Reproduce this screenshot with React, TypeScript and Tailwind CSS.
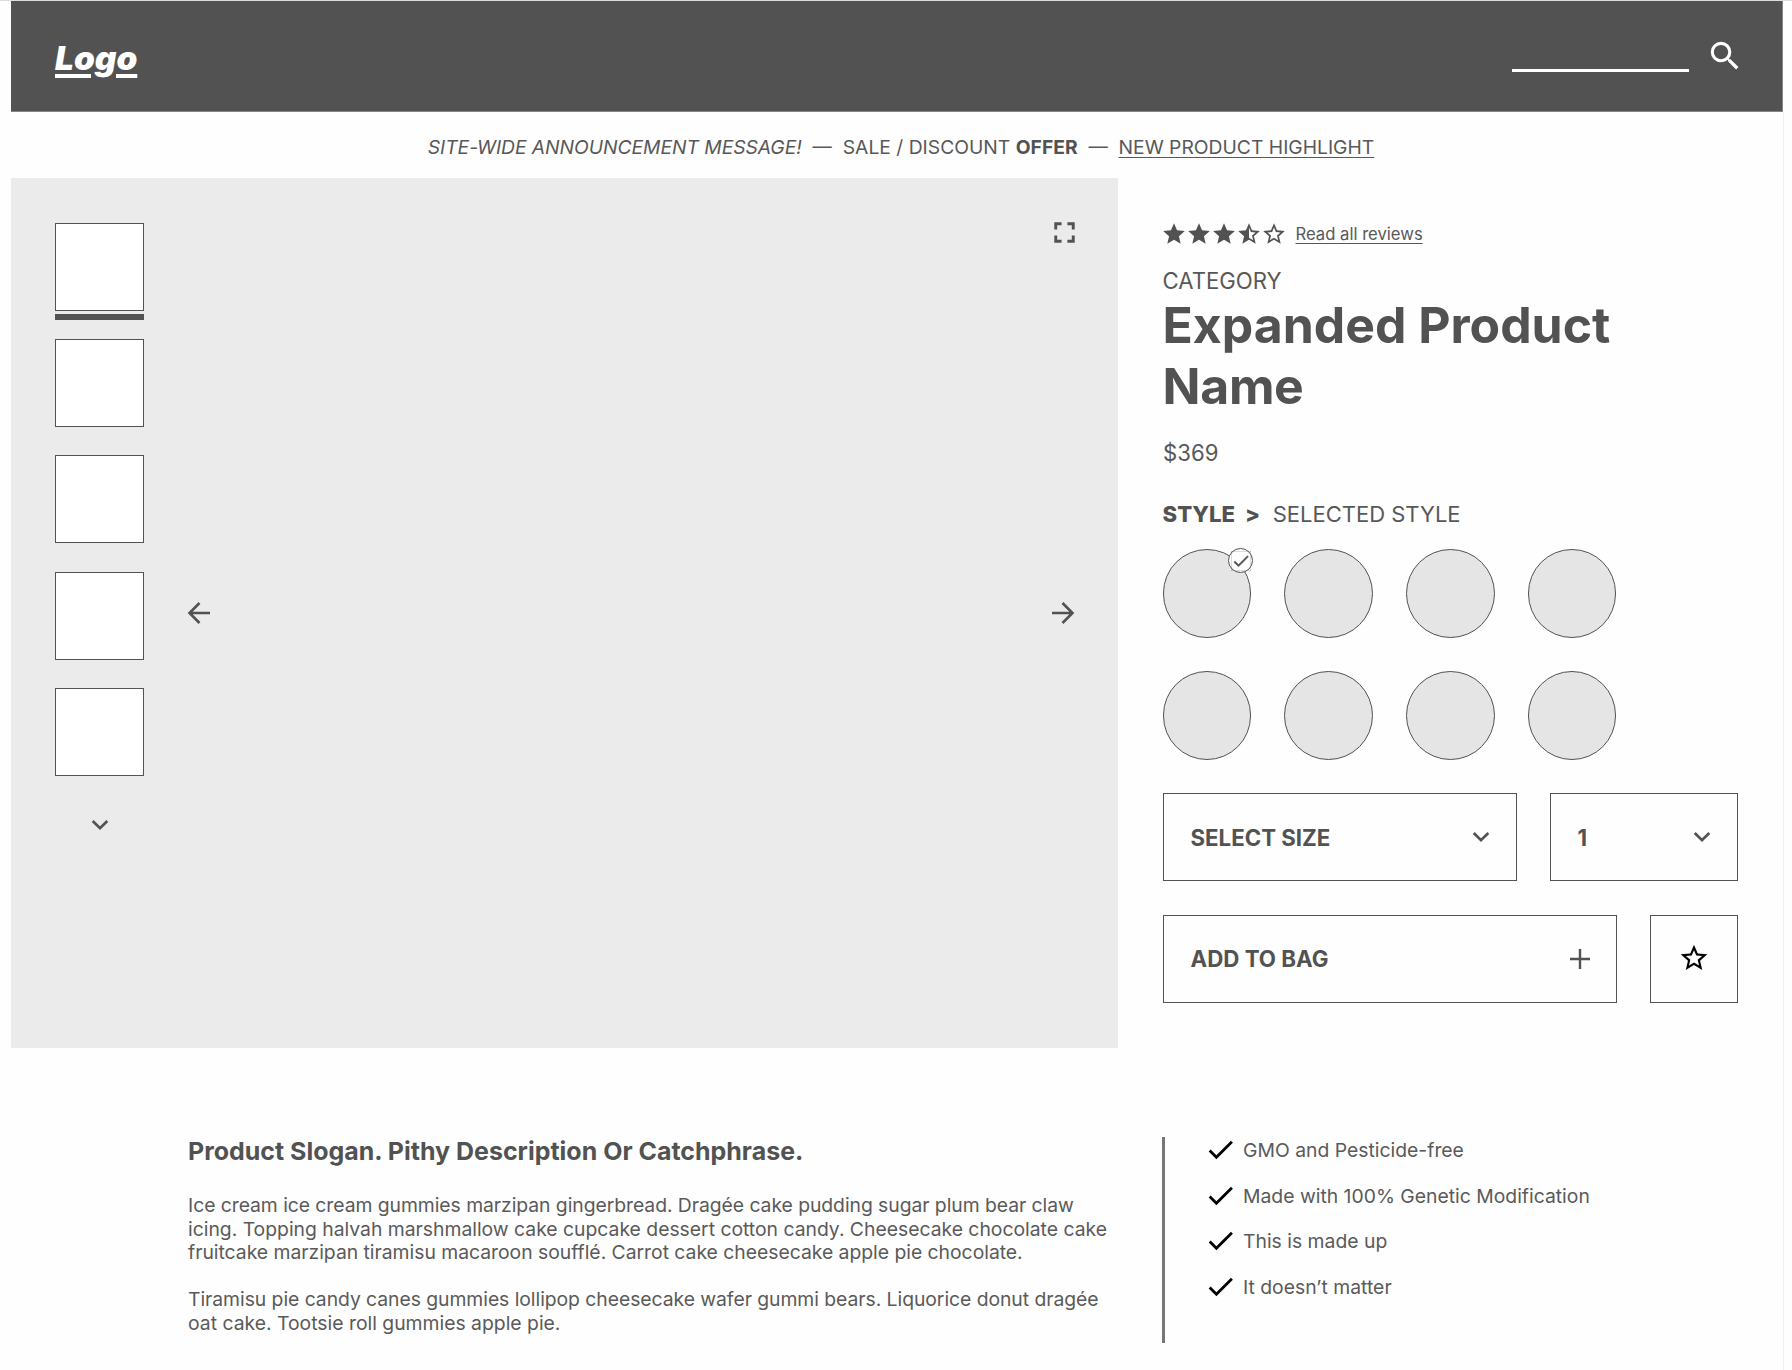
import { MdStar, MdStarBorder, MdStarHalf, MdFullscreen, MdSearch, MdCheck } from "react-icons/md";

const thumbnails = [0, 1, 2, 3, 4];
const swatches = [0, 1, 2, 3, 4, 5, 6, 7];
const features = [
  "GMO and Pesticide-free",
  "Made with 100% Genetic Modification",
  "This is made up",
  "It doesn’t matter",
];

function Chevron() {
  return (
    <svg width="18" height="12" viewBox="0 0 18 12" fill="none" stroke="currentColor" strokeWidth="2.7">
      <path d="M1.7 2L9 9.2 16.3 2" />
    </svg>
  );
}

function Arrow({ flip = false }: { flip?: boolean }) {
  return (
    <svg
      width="24"
      height="24"
      viewBox="0 0 24 24"
      fill="none"
      stroke="currentColor"
      strokeWidth="2.6"
      className={flip ? "rotate-180" : ""}
    >
      <path d="M23 12H3M12.5 2L2.5 12l10 10" />
    </svg>
  );
}

function Header() {
  return (
    <header className="ml-[11px] flex h-[111px] w-[1772px] items-start justify-between border-r border-b border-[#858585] bg-[#525252] pl-11 pr-[38px] text-white">
      <a className="mt-[35px] text-[33.4px] leading-[44px] font-black italic underline decoration-[4px] underline-offset-[4px]">
        Logo
      </a>
      <div className="flex">
        <div className="h-[71px] w-[177px] border-b-[3px] border-white" />
        <MdSearch className="mt-[36px] ml-[17px] size-[38px]" />
      </div>
    </header>
  );
}

function Announcement() {
  return (
    <p className="ml-[11px] h-[66px] w-[1772px] pt-[23.4px] pl-2 text-center text-[19.3px] leading-[24px] whitespace-pre text-[#585858]">
      <em className="tracking-[-0.05px]">SITE-WIDE ANNOUNCEMENT MESSAGE!</em>
      {"  —  SALE / DISCOUNT "}
      <strong className="font-bold text-[#525252]">OFFER</strong>
      {"  —  "}
      <a className="underline decoration-1 underline-offset-[3px]">NEW PRODUCT HIGHLIGHT</a>
    </p>
  );
}

function Gallery() {
  return (
    <section className="flex h-[869.5px] w-[1107px] bg-[#ebebeb] pt-[45px] pr-[43px] pl-11">
      <div className="flex w-[89px] flex-col items-center">
        {thumbnails.map((i) => (
          <div key={i} className="h-[116.2px] w-full">
            <div className="h-[88px] border border-[#525252] bg-white" />
            {i === 0 && <div className="mt-[3px] h-[6px] bg-[#525252]" />}
          </div>
        ))}
        <div className="mt-[15.5px]">
          <Chevron />
        </div>
      </div>
      <div className="ml-[43px] flex grow items-start justify-between">
        <div className="mt-[378px]">
          <Arrow />
        </div>
        <div className="flex flex-col items-end">
          <MdFullscreen className="-mt-[8px] -mr-[6.5px] size-[35px]" />
          <div className="mt-[351px]">
            <Arrow flip />
          </div>
        </div>
      </div>
    </section>
  );
}

function ProductPanel() {
  return (
    <section className="w-[665px] pt-[43px] pr-[45px] pl-[45px]">
      <div className="flex items-center">
        <div className="-ml-[2.5px] flex w-[124.5px]">
          <MdStar className="-mr-[1px] size-[26px] shrink-0" />
          <MdStar className="-mr-[1px] size-[26px] shrink-0" />
          <MdStar className="-mr-[1px] size-[26px] shrink-0" />
          <MdStarHalf className="-mr-[1px] size-[26px] shrink-0" />
          <MdStarBorder className="size-[26px] shrink-0" />
        </div>
        <a className="ml-[10.5px] text-[16.65px] leading-[25px] text-[#585858] underline decoration-1 underline-offset-[3px]">
          Read all reviews
        </a>
      </div>
      <p className="mt-[19px] -ml-[0.5px] text-[22.15px] leading-[30px] text-[#585858]">CATEGORY</p>
      <h1 className="-mt-px -ml-[0.5px] text-[49.9px] leading-[60.7px] font-bold">
        Expanded Product
        <br />
        <span className="tracking-[-0.3px]">Name</span>
      </h1>
      <p className="mt-[22px] text-[22.2px] leading-[30px] text-[#585858]">$369</p>
      <p className="mt-[30.5px] -ml-[0.5px] text-[22px] leading-[30px] whitespace-pre text-[#585858]">
        <strong className="mr-[10px] text-[22.2px] font-extrabold text-[#525252]">STYLE</strong>
        <strong className="mr-[12.5px] font-extrabold text-[#525252]">&gt;</strong>
        SELECTED STYLE
      </p>
      <div className="mt-[20.5px] -ml-[0.3px] grid grid-cols-[repeat(4,88.4px)] gap-[33.4px]">
        {swatches.map((i) => (
          <div key={i} className="relative h-[88.4px] rounded-full border border-[#525252] bg-[#e5e5e5]">
            {i === 0 && (
              <span className="absolute -top-[2px] -right-[3px] flex size-[25px] items-center justify-center rounded-full border border-[#525252] bg-white">
                <MdCheck className="size-[20px] stroke-current stroke-[0.5]" />
              </span>
            )}
          </div>
        ))}
      </div>
      <div className="mt-[33.8px] flex justify-between text-[22.25px] font-bold">
        <div className="flex h-[88px] w-[354px] items-center justify-between border border-[#525252] pr-[26px] pl-[26.5px]">
          SELECT SIZE
          <Chevron />
        </div>
        <div className="flex h-[88px] w-[188.5px] items-center justify-between border border-[#525252] pr-[26px] pl-[27px]">
          1
          <Chevron />
        </div>
      </div>
      <div className="mt-[34px] flex justify-between text-[22.3px] font-bold">
        <div className="flex h-[88px] w-[454px] items-center justify-between border border-[#525252] pr-[26.5px] pl-[26.5px]">
          <span className="-mt-px">ADD TO BAG</span>
          <svg width="20" height="20" viewBox="0 0 20 20" fill="none" stroke="currentColor" strokeWidth="2.4">
            <path d="M10 0v20M0 10h20" />
          </svg>
        </div>
        <div className="flex h-[88px] w-[88px] items-center justify-center border border-[#525252]">
          <MdStarBorder className="mb-[3px] size-[32px] text-black" />
        </div>
      </div>
    </section>
  );
}

function Details() {
  return (
    <section className="mt-[89.5px] flex h-[233px] pl-[188px]">
      <div className="w-[974px]">
        <h2 className="text-[24.98px] leading-[28px] font-bold">Product Slogan. Pithy Description Or Catchphrase.</h2>
        <p className="mt-[29px] text-[19.35px] leading-[23.5px] text-[#5a5a5a]">
          <span className="tracking-[-0.055px]">
            Ice cream ice cream gummies marzipan gingerbread. Dragée cake pudding sugar plum bear claw
          </span>
          <br />
          <span className="tracking-[-0.01px]">
            icing. Topping halvah marshmallow cake cupcake dessert cotton candy. Cheesecake chocolate cake
          </span>
          <br />
          <span className="tracking-[-0.02px]">
            fruitcake marzipan tiramisu macaroon soufflé. Carrot cake cheesecake apple pie chocolate.
          </span>
        </p>
        <p className="mt-[23.5px] text-[19.35px] leading-[23.5px] text-[#5a5a5a]">
          <span className="tracking-[-0.05px]">
            Tiramisu pie candy canes gummies lollipop cheesecake wafer gummi bears. Liquorice donut dragée
          </span>
          <br />
          oat cake. Tootsie roll gummies apple pie.
        </p>
      </div>
      <ul className="h-[206px] border-l-[3px] border-[#777777] pl-[38.5px]">
        {features.map((text) => (
          <li key={text} className="flex h-[45.7px] text-[19.35px] leading-[26px] text-[#5a5a5a]">
            <MdCheck className="-mt-[4px] mr-[6.5px] size-[33px] text-black" />
            {text}
          </li>
        ))}
      </ul>
    </section>
  );
}

export default function App() {
  return (
    <div className="h-[1370px] w-[1792px] overflow-hidden border-t border-[#dcdde0] bg-[#fefefe] font-['Inter',sans-serif] text-[#525252]">
      <Header />
      <div className="w-[1784px] border-r border-[#eeeeee]">
        <Announcement />
        <div className="ml-[11px] flex w-[1772px]">
          <Gallery />
          <ProductPanel />
        </div>
        <Details />
      </div>
    </div>
  );
}
